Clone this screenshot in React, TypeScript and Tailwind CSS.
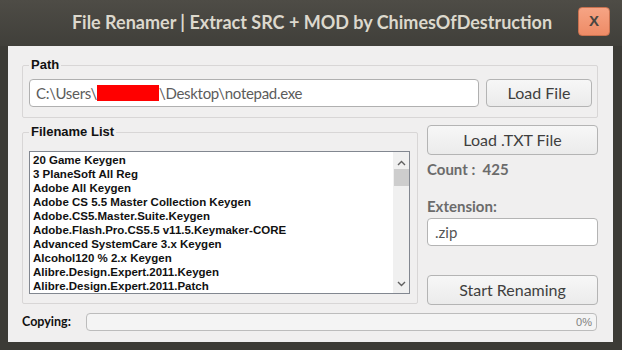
import React from "react";

const files = [
  "20 Game Keygen",
  "3 PlaneSoft All Reg",
  "Adobe All Keygen",
  "Adobe CS 5.5 Master Collection Keygen",
  "Adobe.CS5.Master.Suite.Keygen",
  "Adobe.Flash.Pro.CS5.5 v11.5.Keymaker-CORE",
  "Advanced SystemCare 3.x Keygen",
  "Alcohol120 % 2.x Keygen",
  "Alibre.Design.Expert.2011.Keygen",
  "Alibre.Design.Expert.2011.Patch",
];

const ui = "font-['Lato',sans-serif]";

function Button({ label }: { label: string }) {
  return (
    <button
      className={`${ui} h-[30px] w-full rounded-[4px] border border-[#b4b4b4] bg-gradient-to-b from-[#f7f7f7] to-[#ebebeb] text-[16px] text-[#3f3f3f]`}
    >
      {label}
    </button>
  );
}

export default function App() {
  return (
    <div className="flex h-[350px] w-[622px] flex-col bg-[#3c3b36]">
      {/* title bar */}
      <div className="relative flex h-[46px] items-center justify-center bg-gradient-to-b from-[#4e4c46] to-[#403f3a]">
        <span className={`${ui} mt-[-2px] pl-[2px] text-[18px] font-bold text-[#dcd8cd]`}>
          File Renamer | Extract SRC + MOD by ChimesOfDestruction
        </span>
        <div className="absolute left-[578px] top-[7px] flex h-[29px] w-[32px] items-center justify-center rounded-[4px] border border-[#c8714f] bg-gradient-to-b from-[#f6a484] to-[#ee8b66] font-['Liberation_Sans',sans-serif] text-[15px] font-bold text-[#4a4642]">
          X
        </div>
      </div>

      {/* body */}
      <div className="ml-[8px] mr-[9px] flex h-[296px] flex-col bg-[#f0efef] pl-[14px] pr-[15px] pt-[11px]">
        <fieldset className="w-[576px] rounded-[2px] border border-[#d8d6d6] pb-[10px] pl-[6px] pr-[4px]">
          <legend className="px-[2px] font-['Liberation_Sans',sans-serif] text-[13px] font-bold leading-[16px] text-[#111]">
            Path
          </legend>
          <div className="mt-[6px] flex gap-[7px]">
            <div className={`${ui} flex h-[28px] w-[450px] items-center rounded-[4px] border border-[#b0b0b0] bg-white pl-[6px] text-[15px] tracking-[-0.3px] text-[#5c5c5c]`}>
              C:\Users\
              <span className="inline-block h-[16px] w-[62px] bg-[#ff0000]" />
              \Desktop\notepad.exe
            </div>
            <div className="w-[106px] [&>button]:h-[28px]">
              <Button label="Load File" />
            </div>
          </div>
        </fieldset>

        <div className="mt-[6px] flex">
          <fieldset className="h-[180px] w-[396px] rounded-[2px] border border-[#d8d6d6] pl-[6px] pr-[7px]">
            <legend className="px-[2px] font-['Liberation_Sans',sans-serif] text-[13px] font-bold leading-[16px] text-[#111]">
              Filename List
            </legend>
            <div className="mt-[11px] flex h-[143px] overflow-hidden border border-[#828790] bg-white">
              <div className="flex-1 pl-[3px] pt-[1px] font-['Liberation_Sans',sans-serif] text-[11.5px] font-bold leading-[14px] text-[#111]">
                {files.map((f) => (
                  <div key={f} className="h-[14px] whitespace-nowrap">
                    {f}
                  </div>
                ))}
              </div>
              <div className="flex w-[16px] flex-col items-center bg-[#f0f0f0]">
                <svg width="9" height="6" viewBox="0 0 9 6" className="mt-[8px]">
                  <path d="M1 5 L4.5 1.5 L8 5" fill="none" stroke="#606060" strokeWidth="1.4" />
                </svg>
                <div className="mt-[3px] h-[17px] w-[15px] bg-[#cdcdcd]" />
                <div className="flex-1" />
                <svg width="9" height="6" viewBox="0 0 9 6" className="mb-[6px]">
                  <path d="M1 1 L4.5 4.5 L8 1" fill="none" stroke="#606060" strokeWidth="1.4" />
                </svg>
              </div>
            </div>
          </fieldset>

          <div className="ml-[9px] flex w-[171px] flex-col pt-[1px]">
            <Button label="Load .TXT File" />
            <div className={`${ui} mt-[4px] h-[20px] text-[15px] font-bold leading-[20px] text-[#6b6b6b]`}>
              Count :&nbsp; 425
            </div>
            <div className={`${ui} mt-[17px] h-[20px] text-[15px] font-bold leading-[20px] text-[#6b6b6b]`}>
              Extension:
            </div>
            <div className={`${ui} mt-[2px] flex h-[28px] items-center rounded-[4px] border border-[#b4b4b4] bg-white pl-[7px] text-[15px] text-[#555]`}>
              .zip
            </div>
            <div className="mt-[29px]">
              <Button label="Start Renaming" />
            </div>
          </div>
        </div>

        <div className="mt-[8px] flex items-center">
          <div className={`${ui} w-[64px] text-[12.5px] font-bold text-[#111]`}>Copying:</div>
          <div className="flex h-[18px] w-[511px] items-center justify-end rounded-[4px] border border-[#bcbcbc] bg-[#f4f4f4] pr-[4px] font-['Liberation_Sans',sans-serif] text-[11px] text-[#808080]">
            0%
          </div>
        </div>
      </div>
    </div>
  );
}
